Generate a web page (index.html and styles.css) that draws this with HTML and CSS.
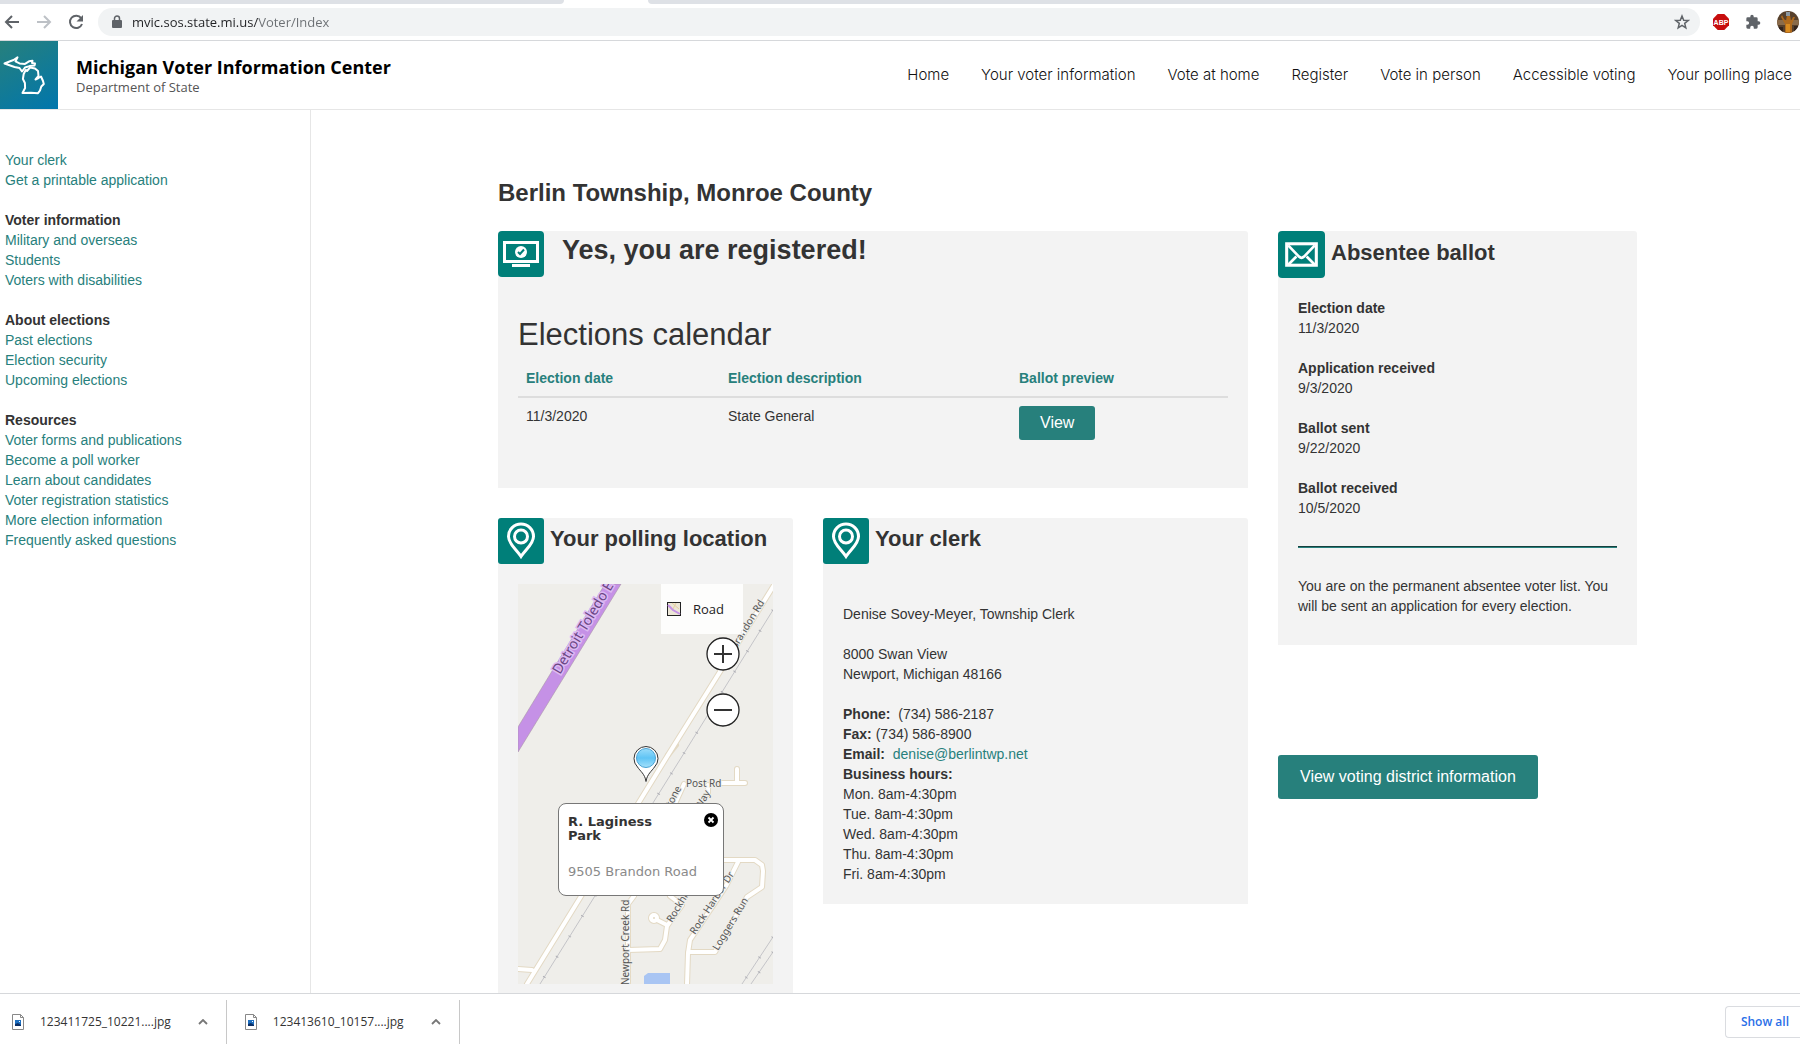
FILE: index.html
```html
<!DOCTYPE html>
<html lang="en">
<head>
<meta charset="utf-8">
<title>Michigan Voter Information Center</title>
<link rel="stylesheet" href="styles.css">
</head>
<body>
<div class="tabstrip"><span class="tab-left"></span><span class="tab-right"></span></div>
<div class="toolbar">
  <button class="tool" aria-label="Back"><svg width="16" height="16" viewBox="0 0 16 16"><path d="M15 8H2M8 2L2 8l6 6" fill="none" stroke="#5f6368" stroke-width="2"/></svg></button>
  <button class="tool" aria-label="Forward"><svg width="16" height="16" viewBox="0 0 16 16"><path d="M1 8h13M8 2l6 6-6 6" fill="none" stroke="#bdc1c6" stroke-width="2"/></svg></button>
  <button class="tool" aria-label="Reload"><svg width="16" height="16" viewBox="0 0 16 16"><path d="M13.2 4.2A6.2 6.2 0 1 0 14 10" fill="none" stroke="#5f6368" stroke-width="2"/><path d="M15 1v6.5H8.500z" fill="#5f6368"/></svg></button>
  <div class="address">
    <svg width="10" height="14" viewBox="0 0 10 14"><rect x="0" y="5" width="10" height="8" rx="1" fill="#5f6368"/><path d="M2.500 6V3.500a2.500 2.500 0 0 1 5 0V6" fill="none" stroke="#5f6368" stroke-width="1.500"/></svg>
    <input class="url" type="text" aria-label="Address" value="mvic.sos.state.mi.us/Voter/Index">
    <button class="tool" aria-label="Bookmark"><svg width="16" height="16" viewBox="0 0 16 16"><path d="M8 2l1.700 4.200 4.500.3-3.500 2.900 1.100 4.400L8 11.400l-3.800 2.400 1.100-4.400L1.800 6.500l4.500-.3z" fill="none" stroke="#5f6368" stroke-width="1.500"/></svg></button>
  </div>
  <button class="tool" aria-label="Adblock Plus"><svg width="16" height="16" viewBox="0 0 16 16"><path d="M4.700 0h6.600L16 4.700v6.600L11.300 16H4.700L0 11.300V4.700z" fill="#c70d0d"/><text x="8" y="11" class="abp">ABP</text></svg></button>
  <button class="tool" aria-label="Extensions"><svg width="16" height="16" viewBox="0 0 24 24"><path d="M20.500 11H19V7a2 2 0 0 0-2-2h-4V3.500a2.500 2.500 0 0 0-5 0V5H4a2 2 0 0 0-2 2v3.800h1.500a2.700 2.700 0 0 1 0 5.400H2V20a2 2 0 0 0 2 2h3.800v-1.500a2.700 2.700 0 0 1 5.400 0V22H17a2 2 0 0 0 2-2v-4h1.500a2.500 2.500 0 0 0 0-5z" fill="#5f6368"/></svg></button>
  <button class="tool" aria-label="Profile"><svg width="22" height="22" viewBox="0 0 22 22"><defs><clipPath id="face"><circle cx="11" cy="11" r="11"/></clipPath></defs><g clip-path="url(#face)"><path d="M0 0h22v22H0z" fill="#57402b"/><path d="M0 9h22v5H0z" fill="#8a6b4a"/><path d="M5 4l2 4 2 2 1-6h3l1 6 2-4 2 0-3 7v9H8v-9L4 6z" fill="#b06a1c"/><path d="M9 13h4v8H9z" fill="#d98b1f"/><path d="M0 16h6v6H0zM17 15h5v7h-5z" fill="#33231c"/><path d="M9 1h4v4H9z" fill="#8b97a0"/></g></svg></button>
</div>

<header class="site-header">
  <a class="logo" href="#" aria-label="State of Michigan">
    <svg width="58" height="68" viewBox="0 0 58 68"><g fill="none" stroke="#fff" stroke-width="2" stroke-linejoin="round" stroke-linecap="round"><path d="M4.500 22.500l5-2 4-1.500 4-2.600-2 4 4 2 5.500.5 4-2.600 3.500-.6-.5 2.300 3 .5-.5 2-5 .6-4.500 1.400-3 4-2.500-3.500-5-1z"/><path d="M30 26.500l5 1 3 2.500.5 5-3 3.500 3-1.500 2.500-1.500 2 4.500.8 3-2.500 2.500-1.300 4-2 2.700-7-.5-8.500.3 2.600-5-.2-5-2-4 .8-5 2-4 1.300 1z"/></g></svg>
  </a>
  <div class="brand">
    <h1>Michigan Voter Information Center</h1>
    <p>Department of State</p>
  </div>
  <nav class="main-nav">
    <a href="#">Home</a><a href="#">Your voter information</a><a href="#">Vote at home</a><a href="#">Register</a><a href="#">Vote in person</a><a href="#">Accessible voting</a><a href="#">Your polling place</a>
  </nav>
</header>

<div class="page">
  <aside class="sidebar">
    <ul>
      <li><a href="#">Your clerk</a></li>
      <li><a href="#">Get a printable application</a></li>
    </ul>
    <h2>Voter information</h2>
    <ul>
      <li><a href="#">Military and overseas</a></li>
      <li><a href="#">Students</a></li>
      <li><a href="#">Voters with disabilities</a></li>
    </ul>
    <h2>About elections</h2>
    <ul>
      <li><a href="#">Past elections</a></li>
      <li><a href="#">Election security</a></li>
      <li><a href="#">Upcoming elections</a></li>
    </ul>
    <h2>Resources</h2>
    <ul>
      <li><a href="#">Voter forms and publications</a></li>
      <li><a href="#">Become a poll worker</a></li>
      <li><a href="#">Learn about candidates</a></li>
      <li><a href="#">Voter registration statistics</a></li>
      <li><a href="#">More election information</a></li>
      <li><a href="#">Frequently asked questions</a></li>
    </ul>
  </aside>

  <main class="content">
    <h2 class="place">Berlin Township, Monroe County</h2>
    <div class="columns">
      <div class="col-main">
        <section class="card registered">
          <div class="card-head card-head-lg">
            <svg class="badge" viewBox="0 0 46 46"><rect width="46" height="46" rx="4" fill="#007f79"/><rect x="6.500" y="11.500" width="33" height="19" fill="none" stroke="#fff" stroke-width="3"/><path d="M14 33h18v3H14z" fill="#fff"/><circle cx="23" cy="21" r="6" fill="#fff"/><path d="M20 21l2 2 4-4.500" fill="none" stroke="#007f79" stroke-width="2"/></svg>
            <h3>Yes, you are registered!</h3>
          </div>
          <div class="card-body">
            <h4>Elections calendar</h4>
            <table>
              <colgroup><col class="c-date"><col class="c-desc"><col></colgroup>
              <thead><tr><th>Election date</th><th>Election description</th><th>Ballot preview</th></tr></thead>
              <tbody><tr><td>11/3/2020</td><td>State General</td><td><button class="btn btn-small">View</button></td></tr></tbody>
            </table>
          </div>
        </section>

        <div class="pair">
          <section class="card">
            <div class="card-head">
              <svg class="badge" viewBox="0 0 46 46"><rect width="46" height="46" rx="3" fill="#007f79"/><path d="M23 38.500C18 31 10.500 26 10.500 18.500a12.500 12.500 0 0 1 25 0C35.500 26 28 31 23 38.500z" fill="none" stroke="#fff" stroke-width="3"/><circle cx="23" cy="18.500" r="6.500" fill="none" stroke="#fff" stroke-width="3"/></svg>
              <h3>Your polling location</h3>
            </div>
            <div class="map">
              <svg class="map-art" viewBox="0 0 255 400" preserveAspectRatio="xMidYMid slice">
                <rect width="255" height="400" fill="#efeeea"/>
                <path d="M0 143L87 0h16L0 168z" fill="#c591e6" stroke="#a995a8" stroke-width=".6"/>
                <g class="street-edge">
                  <path d="M258-2L150 171 9 400M0 385l14 1"/><path d="M203 199h24M219 199v-14M190 201v9M166 200l-10 22M150 171l8-10M205 276h32l7 5 1 6-1 16-15 10-32 55h-27M220 278l-12 24-36 54-2 13-1 32M116 312l-6 8v80M152 312l12 9-15 21-2 14-5 9-32 1M149 341l-10-5"/><circle cx="136" cy="334" r="3"/>
                </g>
                <g class="street">
                  <path d="M258-2L150 171 9 400M0 385l14 1"/><path d="M203 199h24M219 199v-14M190 201v9M166 200l-10 22M205 276h32l7 5 1 6-1 16-15 10-32 55h-27M220 278l-12 24-36 54-2 13-1 32M116 312l-6 8v80M152 312l12 9-15 21-2 14-5 9-32 1M149 341l-10-5"/><circle cx="136" cy="334" r="3"/>
                </g>
                <g class="rail"><path d="M255 26L168 166 22 400M255 353l-31 47M255 368l-22 32"/></g>
                <g class="rail-ties"><path d="M255 26L168 166 22 400M255 353l-31 47M255 368l-22 32"/></g>
                <path d="M126 400v-8l4-3h22v11z" fill="#a9c5f3"/>
                <text class="label-major" transform="translate(42 91) rotate(-59)">Detroit Toledo E</text>
                <g class="label">
                  <text transform="translate(218 66) rotate(-59)">Brandon Rd</text>
                  <text class="label-wide" x="168" y="203">Post Rd</text>
                  <text transform="translate(151 228) rotate(-62)">Stone</text>
                  <text transform="translate(183 226) rotate(-62)">Way</text>
                  <text transform="translate(111 401) rotate(-90)">Newport Creek Rd</text>
                  <text transform="translate(154 339) rotate(-59)">Rockhill Way</text>
                  <text transform="translate(177 351) rotate(-57)">Rock Harbor Dr</text>
                  <text transform="translate(200 367) rotate(-59)">Loggers Run</text>
                </g>
              </svg>
              <button class="map-type"><svg width="14" height="14" viewBox="0 0 14 14"><rect x=".5" y=".5" width="13" height="13" fill="#ece6d6" stroke="#222"/><path d="M1 3l5 5 7 4" fill="none" stroke="#c591e6" stroke-width="2"/><path d="M5 1l7 6M9 1l-3 6" fill="none" stroke="#e6cfa0"/></svg>Road</button>
              <div class="zoom">
                <button aria-label="Zoom in"><svg width="34" height="34" viewBox="0 0 34 34"><circle cx="17" cy="17" r="16" fill="#fff" stroke="#222" stroke-width="1.300"/><path d="M8 17h18M17 8v18" stroke="#333" stroke-width="2"/></svg></button>
                <button aria-label="Zoom out"><svg width="34" height="34" viewBox="0 0 34 34"><circle cx="17" cy="17" r="16" fill="#fff" stroke="#222" stroke-width="1.300"/><path d="M8 17h18" stroke="#333" stroke-width="2"/></svg></button>
              </div>
              <svg class="pin" width="26" height="38" viewBox="0 0 26 38"><defs><linearGradient id="sky" x1="0" y1="0" x2="0" y2="1"><stop offset="0" stop-color="#9bdcfa"/><stop offset=".5" stop-color="#5fc4f5"/><stop offset="1" stop-color="#a5e1fb"/></linearGradient></defs><path d="M13 36.500C12 29 7 26 4.500 22A12 12 0 1 1 21.500 22C19 26 14 29 13 36.500z" fill="#fff" stroke="#333"/><circle cx="13" cy="13" r="9.500" fill="url(#sky)" stroke="#4aa3d4"/></svg>
              <div class="popup">
                <strong>R. Laginess<br>Park</strong>
                <p>9505 Brandon Road</p>
                <button class="close" aria-label="Close"><svg width="14" height="14" viewBox="0 0 14 14"><circle cx="7" cy="7" r="7" fill="#000"/><path d="M4.500 4.500l5 5M9.500 4.500l-5 5" stroke="#fff" stroke-width="1.800"/></svg></button>
              </div>
            </div>
          </section>

          <section class="card clerk">
            <div class="card-head">
              <svg class="badge" viewBox="0 0 46 46"><rect width="46" height="46" rx="3" fill="#007f79"/><path d="M23 38.500C18 31 10.500 26 10.500 18.500a12.500 12.500 0 0 1 25 0C35.500 26 28 31 23 38.500z" fill="none" stroke="#fff" stroke-width="3"/><circle cx="23" cy="18.500" r="6.500" fill="none" stroke="#fff" stroke-width="3"/></svg>
              <h3>Your clerk</h3>
            </div>
            <div class="clerk-body">
              <p>Denise Sovey-Meyer, Township Clerk</p>
              <p>8000 Swan View<br>Newport, Michigan 48166</p>
              <p><b>Phone:</b>&nbsp; (734) 586-2187<br><b>Fax:</b> (734) 586-8900<br><b>Email:</b>&nbsp; <a href="#">denise@berlintwp.net</a><br><b>Business hours:</b><br>Mon. 8am-4:30pm<br>Tue. 8am-4:30pm<br>Wed. 8am-4:30pm<br>Thu. 8am-4:30pm<br>Fri. 8am-4:30pm</p>
            </div>
          </section>
        </div>
      </div>

      <div class="col-side">
        <section class="card absentee">
          <div class="card-head">
            <svg class="badge" viewBox="0 0 46 46"><rect width="46" height="46" rx="4" fill="#007f79"/><rect x="8.500" y="12.500" width="29" height="21" fill="none" stroke="#fff" stroke-width="3"/><path d="M10 14l10.500 11q2.500 2.500 5 0L36 14M10 33l8-8M36 33l-8-8" fill="none" stroke="#fff" stroke-width="2.600"/></svg>
            <h3>Absentee ballot</h3>
          </div>
          <dl>
            <div><dt>Election date</dt><dd>11/3/2020</dd></div>
            <div><dt>Application received</dt><dd>9/3/2020</dd></div>
            <div><dt>Ballot sent</dt><dd>9/22/2020</dd></div>
            <div><dt>Ballot received</dt><dd>10/5/2020</dd></div>
          </dl>
          <hr>
          <p class="note">You are on the permanent absentee voter list. You will be sent an application for every election.</p>
        </section>
        <button class="btn btn-large">View voting district information</button>
      </div>
    </div>
  </main>
</div>

<footer class="downloads">
  <div class="download">
    <svg width="12" height="16" viewBox="0 0 12 16"><path d="M.5.500h8l3 3v12H.5z" fill="#fff" stroke="#888"/><path d="M8.500.500v3h3" fill="none" stroke="#888"/><path d="M3 6h6v6H3z" fill="#1d6fc0"/><path d="M3 10l3-1 3 2v1H3z" fill="#0b2f66"/><path d="M7 7h1v1H7z" fill="#fff"/></svg>
    <span>123411725_10221....jpg</span>
    <button class="tool" aria-label="Options"><svg width="10" height="6" viewBox="0 0 10 6"><path d="M1 5l4-4 4 4" fill="none" stroke="#777" stroke-width="1.800"/></svg></button>
  </div>
  <div class="download">
    <svg width="12" height="16" viewBox="0 0 12 16"><path d="M.5.500h8l3 3v12H.5z" fill="#fff" stroke="#888"/><path d="M8.500.500v3h3" fill="none" stroke="#888"/><path d="M3 6h6v6H3z" fill="#1d6fc0"/><path d="M3 10l3-1 3 2v1H3z" fill="#0b2f66"/><path d="M7 7h1v1H7z" fill="#fff"/></svg>
    <span>123413610_10157....jpg</span>
    <button class="tool" aria-label="Options"><svg width="10" height="6" viewBox="0 0 10 6"><path d="M1 5l4-4 4 4" fill="none" stroke="#777" stroke-width="1.800"/></svg></button>
  </div>
  <button class="show-all">Show all</button>
</footer>
</body>
</html>
```
FILE: styles.css
```css
* { box-sizing: border-box; }

body {
  margin: 0;
  height: 100vh;
  display: flex;
  flex-direction: column;
  overflow: hidden;
  background: #fff;
  color: #333;
  font: 14px/20px "Liberation Sans", Arial, sans-serif;
}

h1, h2, h3, h4, p, ul, dl, dd { margin: 0; padding: 0; }
ul { list-style: none; }
a { color: #27807c; text-decoration: none; }
svg { display: block; flex: none; }
button { margin: 0; padding: 0; border: 0; background: none; font-family: inherit; cursor: pointer; }

/* Browser chrome */
.tabstrip { display: flex; justify-content: space-between; gap: 84px; height: 4px; flex: none; }
.tab-left { flex: 564; background: #dee1e6; border-bottom-right-radius: 4px; }
.tab-right { flex: 1152; background: #dee1e6; border-bottom-left-radius: 4px; }

.toolbar {
  display: flex;
  align-items: center;
  gap: 16px;
  height: 37px;
  flex: none;
  padding: 0 2px 0 4px;
  border-bottom: 1px solid #d6d8db;
}
.toolbar > .tool { flex: none; }
.toolbar > .tool:last-child { margin-right: -1px; }
.address {
  display: flex;
  align-items: center;
  gap: 10px;
  flex: 1;
  height: 28px;
  margin: 0 -3px 0 -2px;
  padding: 0 10px 0 14px;
  border-radius: 14px;
  background: #f1f3f4;
}
.url {
  flex: 1;
  min-width: 0;
  padding: 0;
  border: 0;
  outline: 0;
  color: #202124;
  font: 13px/20px "Open Sans", "Noto Sans", sans-serif;
  background: linear-gradient(90deg, #202124 126px, #6b6f73 126px);
  -webkit-background-clip: text;
  background-clip: text;
  -webkit-text-fill-color: transparent;
}
.abp { font: bold 7px "Liberation Sans", sans-serif; fill: #fff; text-anchor: middle; }

/* Site header */
.site-header {
  display: flex;
  align-items: center;
  height: 69px;
  flex: none;
  padding-right: 8px;
  border-bottom: 1px solid #e6e6e6;
}
.logo { background: linear-gradient(150deg, #27807c, #0076ad); }
.brand { padding-left: 18px; }
.brand h1 { color: #000; font: 700 18px/24px "Open Sans", "Noto Sans", sans-serif; }
.brand p { color: #555; font: 13px/16px "Open Sans", "Noto Sans", sans-serif; }
.main-nav { display: flex; gap: 32px; margin-left: auto; }
.main-nav a { color: #111; font: 300 15px/24px Inter, "Open Sans", sans-serif; white-space: nowrap; }

/* Page */
.page { display: flex; flex: 1; min-height: 0; overflow: hidden; }
.sidebar { width: 311px; flex: none; padding: 40px 5px; border-right: 1px solid #e6e6e6; }
.sidebar h2 { margin-top: 20px; font-size: 14px; line-height: 20px; }

.content { flex: 1; min-width: 0; padding: 68px 163px 0 187px; }
.place { margin-bottom: 23px; font-size: 24px; line-height: 30px; }
.columns { display: grid; grid-template-columns: 750fr 359fr; gap: 30px; align-items: start; }
.pair { display: grid; grid-template-columns: 295fr 425fr; gap: 30px; align-items: start; margin-top: 30px; }

.card { border-radius: 3px 3px 0 0; background: #f3f3f3; }
.card-head { display: flex; gap: 6px; }
.card-head h3 { padding-top: 8px; font-size: 22px; line-height: 26px; white-space: nowrap; }
.card-head-lg { gap: 18px; }
.card-head-lg h3 { padding-top: 4px; font-size: 27px; line-height: 30px; }
.badge { width: 46px; height: 46px; }

.card-body { padding: 40px 20px 40px; }
.card-body h4 { margin-bottom: 7px; font-size: 31px; line-height: 36px; font-weight: 400; }
table { width: 100%; border-collapse: collapse; table-layout: fixed; }
.c-date { width: 202px; }
.c-desc { width: 291px; }
th, td { padding: 8px; text-align: left; vertical-align: top; }
th { color: #27807c; border-bottom: 2px solid #ddd; }
td { height: 50px; }

.btn { border-radius: 3px; background: #27807c; color: #fff; font-size: 16px; line-height: 20px; }
.btn-small { display: block; padding: 7px 21px; }
.btn-large { margin-top: 110px; padding: 12px 22px; }

/* Polling map */
.map { position: relative; height: 400px; margin: 20px; overflow: hidden; }
.map-art { width: 100%; height: 100%; }
.street-edge, .street, .rail, .rail-ties { fill: none; stroke-linejoin: round; stroke-linecap: round; }
.street-edge { stroke: #e3d9c4; stroke-width: 6; }
.street { stroke: #fff; stroke-width: 4; }
.rail { stroke: #c4c4c8; stroke-width: 1; }
.rail-ties { stroke: #b0b0b6; stroke-width: 3; stroke-dasharray: 1 23; stroke-linecap: butt; }
.label { font: 10px "Noto Sans", sans-serif; fill: #555; stroke: #efeeea; stroke-width: 2px; paint-order: stroke; }
.label-major { font: 14px "Noto Sans", sans-serif; fill: #6a4584; stroke: #dcb9f2; stroke-width: 3px; paint-order: stroke; }
.map-type {
  position: absolute;
  top: 0;
  right: 30px;
  display: flex;
  align-items: center;
  gap: 12px;
  width: 82px;
  height: 50px;
  padding-left: 6px;
  background: rgba(255, 255, 255, .85);
  color: #222;
  font: 13px/20px "Open Sans", "Noto Sans", sans-serif;
}
.zoom { position: absolute; top: 53px; right: 33px; display: grid; gap: 22px; }
.pin { position: absolute; top: 161px; left: 115px; }
.popup {
  position: absolute;
  top: 219px;
  left: 40px;
  width: 166px;
  height: 93px;
  padding: 11px 9px;
  border: 1px solid #777;
  border-radius: 8px;
  background: #fff;
  font: 13px/14px "DejaVu Sans", sans-serif;
}
.popup p { margin-top: 22px; color: #8a8a8a; white-space: nowrap; }
.popup .close { position: absolute; top: 9px; right: 5px; }

/* Clerk */
.clerk-body { padding: 40px 20px 20px; }
.clerk-body p { margin-bottom: 20px; }
.clerk-body p:last-child { margin-bottom: 0; }

/* Absentee ballot */
.absentee { padding-bottom: 29px; }
.absentee .badge { width: 47px; height: 47px; }
.absentee .card-head h3 { padding-top: 9px; }
.absentee dl { display: grid; gap: 20px; padding: 20px 20px 0; }
dt { font-weight: bold; }
hr { height: 2px; margin: 28px 20px; border: 0; border-top: 1px solid #163f3d; background: #27807c; }
.note { padding: 0 20px; }

/* Downloads bar */
.downloads { display: flex; align-items: center; height: 57px; flex: none; border-top: 1px solid #d6d8db; }
.download {
  display: flex;
  align-items: center;
  gap: 16px;
  height: 44px;
  padding: 0 18px 0 12px;
  border-right: 1px solid #c8c8c8;
  color: #333;
  font: 12px/20px "Open Sans", "Noto Sans", sans-serif;
}
.download + .download { padding-left: 18px; }
.download .tool { margin-left: 11px; }
.show-all {
  height: 32px;
  margin-left: auto;
  padding: 0 11px 0 15px;
  border: 1px solid #dadce0;
  border-right: 0;
  border-radius: 4px 0 0 4px;
  color: #2a6fe8;
  font: 600 12px/20px "Open Sans", "Noto Sans", sans-serif;
}
```
